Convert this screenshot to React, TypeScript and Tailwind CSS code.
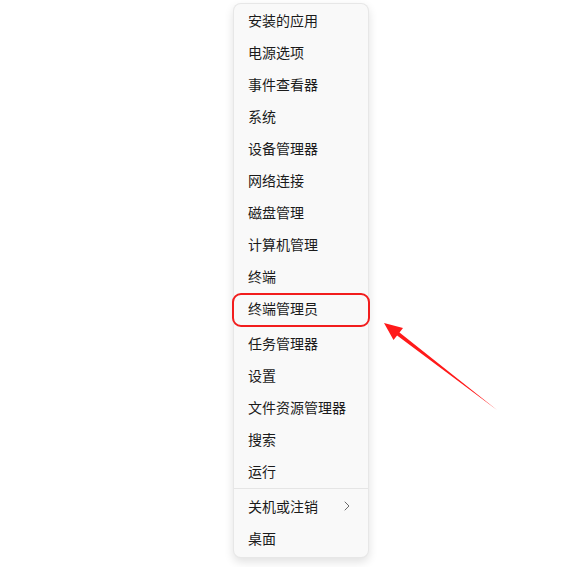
const items = [
  '安装的应用',
  '电源选项',
  '事件查看器',
  '系统',
  '设备管理器',
  '网络连接',
  '磁盘管理',
  '计算机管理',
  '终端',
  '终端管理员',
  '任务管理器',
  '设置',
  '文件资源管理器',
  '搜索',
  '运行',
];

function Row({ label, chevron }: { label: string; chevron?: boolean }) {
  return (
    <div className="flex h-8 items-center justify-between pl-[14px] pr-[18px] text-[14px] leading-none text-[#1b1b1b]">
      <span>{label}</span>
      {chevron && (
        <svg width="6" height="10" viewBox="0 0 6 10" fill="none">
          <path d="M1 1l4 4-4 4" stroke="#6b6b6b" strokeWidth="1" strokeLinecap="round" strokeLinejoin="round" />
        </svg>
      )}
    </div>
  );
}

export default function App() {
  return (
    <div
      className="relative h-[567px] w-[584px] overflow-hidden bg-white"
      style={{ fontFamily: '"Microsoft YaHei UI", "Noto Sans CJK SC", "Noto Sans", sans-serif' }}
    >
      <div className="pl-[233px] pt-[3px]">
        <div className="w-[136px] rounded-lg border border-black/[0.07] bg-[#f9f9f9] pb-[3px] shadow-[0_4px_10px_rgba(0,0,0,0.12)]">
          {items.map((label, i) => (
            <div key={label} className={i === 9 ? 'mb-[3px]' : ''}>
              <Row label={label} />
            </div>
          ))}
          <div className="my-[1px] h-px bg-[#e5e5e5]" />
          <Row label="关机或注销" chevron />
          <Row label="桌面" />
        </div>
      </div>

      {/* highlight around 终端管理员 */}
      <div className="absolute left-[232px] top-[293px] h-[34px] w-[138px] rounded-[9px] border-2 border-[#f21d1d]" />

      {/* arrow */}
      <svg className="absolute left-0 top-0" width="584" height="567" viewBox="0 0 584 567">
        <polygon
          points="384,323 403,328 399.5,332.4 497,410 397.1,335.6 393.5,340"
          fill="#ff1a1a"
        />
      </svg>
    </div>
  );
}
